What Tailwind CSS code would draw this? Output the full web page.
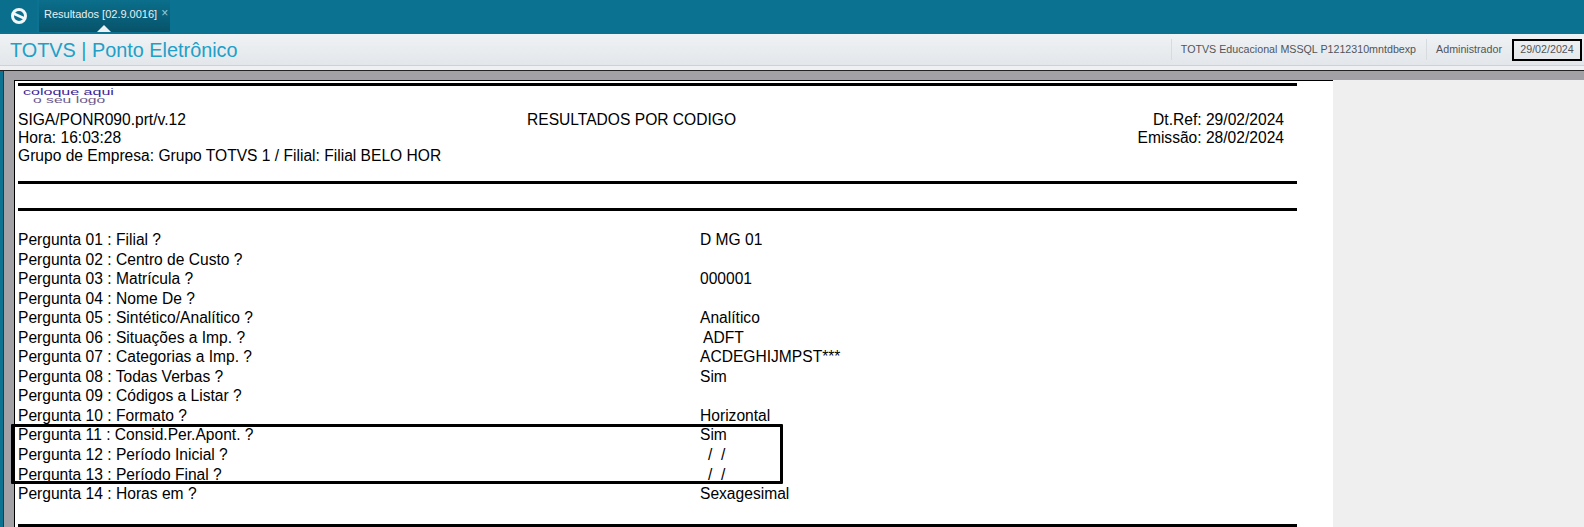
<!DOCTYPE html>
<html lang="pt">
<head>
<meta charset="utf-8">
<script src="https://cdn.jsdelivr.net/npm/@tailwindcss/browser@4"></script>
</head>
<body class="m-0 h-[527px] w-[1584px] overflow-hidden bg-[#efefef] font-['Liberation_Sans',Arial,sans-serif] relative">
<div class="flex h-[34px] bg-[#0b7391]">
  <div class="flex h-[32px] w-[37px] items-center justify-center bg-[#0a6f8c]">
    <svg width="18" height="18" viewBox="0 0 18 18" fill="none"><circle cx="9" cy="9" r="6.5" stroke="#f2f6f8" stroke-width="3"/><path d="M3.5 6.5 L14.5 11.5" stroke="#f2f6f8" stroke-width="2.6"/></svg>
  </div>
  <div class="relative ml-[2px] flex h-[32px] w-[131px] items-start bg-gradient-to-b from-[#0b6f8c] to-[#07536a] pl-[5px] pt-[8px] text-[11px] leading-[13px] text-[#e8f0f3]">
    <span>Resultados [02.9.0016]</span><span class="ml-[4px] mt-[-1px] text-[12px] text-[#a9c6d0]">×</span>
    <div class="absolute left-[58px] top-[25px] h-0 w-0 border-x-[7px] border-b-[7px] border-x-transparent border-b-[#eef1f4]"></div>
  </div>
</div>
<div class="flex h-[32px] items-center justify-between border-b border-[#cfd2d5] bg-gradient-to-b from-[#f0f3f5] to-[#e3e6ea] pl-[10px]">
  <span class="text-[19.85px] leading-[24px] text-[#20a0c8]">TOTVS | Ponto Eletrônico</span>
  <div class="flex h-[22px] items-center text-[10.7px] text-[#50555a]">
    <span class="flex h-[21px] items-center border-l border-[#d8dbde] pl-[9px] pr-[10px]">TOTVS Educacional MSSQL P1212310mntdbexp</span>
    <span class="flex h-[21px] items-center border-l border-[#d8dbde] pl-[9px] pr-[10px]">Administrador</span>
    <span class="mr-[2px] flex h-[22px] w-[70px] items-center justify-center border-[2px] border-black">29/02/2024</span>
  </div>
</div>
<div class="flex h-[461px] flex-col">
  <div class="h-[4px] shrink-0 bg-[#eef0f2]"></div>
  <div class="flex h-[457px] shrink-0 border-t border-[#222]">
    <div class="w-[3px] shrink-0 bg-[#0b7391]"></div>
    <div class="w-[1px] shrink-0 bg-[#333]"></div>
    <div class="flex w-[1329px] shrink-0 flex-col">
      <div class="h-[9px] shrink-0 bg-[#a2a1a5]"></div>
      <div class="flex min-h-0 flex-1">
        <div class="w-[10px] shrink-0 bg-[#a2a1a5]"></div>
        <div class="flex-1 overflow-hidden border-l border-t border-black bg-white pl-[3px] text-[15.6px] leading-[19.55px] text-black">
          <div class="mt-[2px] h-[3px] w-[1279px] bg-black"></div>
          <div class="h-[25px] pl-[5px] pt-[2px] text-[9px] leading-[8px] text-[#3d1f96]">
            <div class="origin-left scale-x-[1.78] whitespace-nowrap">coloque aqui</div><div class="ml-[10px] origin-left scale-x-[1.74] whitespace-nowrap text-[#6d5a8c]">o seu logo</div>
          </div>
          <div class="flex w-[1279px] items-start leading-[18px]">
            <div class="w-[505px]">
              <div>SIGA/PONR090.prt/v.12</div><div>Hora: 16:03:28</div><div class="whitespace-nowrap">Grupo de Empresa: Grupo TOTVS 1 / Filial: Filial BELO HOR</div>
            </div>
            <div class="w-[400px] pl-[4px]">RESULTADOS POR CODIGO</div>
            <div class="flex-1 pr-[13px] text-right"><div>Dt.Ref: 29/02/2024</div><div>Emissão: 28/02/2024</div></div>
          </div>
          <div class="mt-[16px] h-[3px] w-[1279px] bg-black"></div>
          <div class="mt-[24px] h-[3px] w-[1279px] bg-black"></div>
          <div class="mt-[19px] grid grid-cols-[682px_1fr]">
            <div>Pergunta 01 : Filial ?</div><div>D MG 01</div>
            <div>Pergunta 02 : Centro de Custo ?</div><div></div>
            <div>Pergunta 03 : Matrícula ?</div><div>000001</div>
            <div>Pergunta 04 : Nome De ?</div><div></div>
            <div>Pergunta 05 : Sintético/Analítico ?</div><div>Analítico</div>
            <div>Pergunta 06 : Situações a Imp. ?</div><div class="pl-[3px]">ADFT</div>
            <div>Pergunta 07 : Categorias a Imp. ?</div><div>ACDEGHIJMPST***</div>
            <div>Pergunta 08 : Todas Verbas ?</div><div>Sim</div>
            <div>Pergunta 09 : Códigos a Listar ?</div><div></div>
            <div>Pergunta 10 : Formato ?</div><div>Horizontal</div>
            <div>Pergunta 11 : Consid.Per.Apont. ?</div><div>Sim</div>
            <div>Pergunta 12 : Período Inicial ?</div><div class="pl-[8px]">/&nbsp;&nbsp;/</div>
            <div>Pergunta 13 : Período Final ?</div><div class="pl-[8px]">/&nbsp;&nbsp;/</div>
            <div>Pergunta 14 : Horas em ?</div><div>Sexagesimal</div>
          </div>
          <div class="mt-[20px] h-[3px] w-[1279px] bg-black"></div>
        </div>
      </div>
    </div>
    <div class="h-[9px] flex-1 bg-[#a2a1a5]"></div>
  </div>
</div>
<div class="absolute left-[11px] top-[424px] h-[60px] w-[772px] rounded-[1px] border-[3px] border-black"></div>
</body>
</html>
